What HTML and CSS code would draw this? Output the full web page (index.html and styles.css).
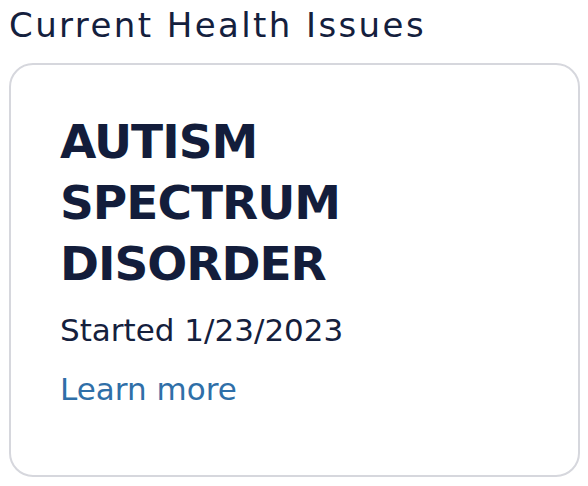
FILE: index.html
```html
<!DOCTYPE html>
<html lang="en">
<head>
<meta charset="utf-8">
<title>Current Health Issues</title>
<link rel="stylesheet" href="styles.css">
</head>
<body>
<main class="page">
  <h2 class="section-title">Current Health Issues</h2>
  <article class="issue-card">
    <h3 class="issue-name">AUTISM SPECTRUM DISORDER</h3>
    <p class="issue-date">Started 1/23/2023</p>
    <a class="issue-link" href="#">Learn more</a>
  </article>
</main>
</body>
</html>
```
FILE: styles.css
```css
* { box-sizing: border-box; }
html, body { margin: 0; padding: 0; background: #ffffff; }
body {
  font-family: "DejaVu Sans", "Noto Sans", sans-serif;
  color: #14203d;
}
.page {
  padding: 5px 8px 0 9px;
  width: 588px;
}
.section-title {
  margin: 0 0 18px 0;
  font-size: 34px;
  line-height: 40px;
  font-weight: 400;
  letter-spacing: 2.4px;
}
.issue-card {
  height: 414px;
  border: 2px solid #d6d7dd;
  border-radius: 24px;
  padding: 46px 40px 0 49px;
  display: flex;
  flex-direction: column;
  align-items: flex-start;
}
.issue-name {
  margin: 0;
  width: 300px;
  font-size: 47px;
  line-height: 61px;
  font-weight: 700;
  letter-spacing: -1px;
  color: #131d3b;
}
.issue-date {
  margin: 16px 0 0 0;
  font-size: 31px;
  line-height: 40px;
  font-weight: 400;
}
.issue-link {
  margin-top: 19px;
  font-size: 31px;
  line-height: 40px;
  color: #2f6fa8;
  text-decoration: none;
}
```
